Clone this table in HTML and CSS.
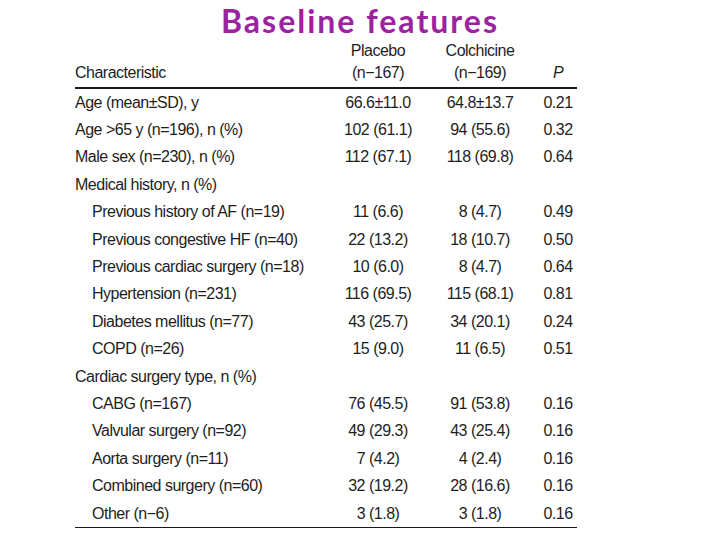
FILE: index.html
```html
<!DOCTYPE html>
<html>
<head>
<meta charset="utf-8">
<link rel="stylesheet" href="styles.css">
</head>
<body>
<div class="slide">
  <h1 class="title">Baseline features</h1>
  <table class="tbl">
    <colgroup>
      <col class="c-name"><col class="c-pla"><col class="c-col"><col class="c-p">
    </colgroup>
    <thead>
      <tr>
        <th class="name">Characteristic</th>
        <th class="num">Placebo<br>(n−167)</th>
        <th class="num">Colchicine<br>(n−169)</th>
        <th class="num"><i>P</i></th>
      </tr>
    </thead>
    <tbody>
      <tr><td class="name">Age (mean±SD), y</td><td class="num">66.6±11.0</td><td class="num">64.8±13.7</td><td class="num">0.21</td></tr>
      <tr><td class="name">Age &gt;65 y (n=196), n (%)</td><td class="num">102 (61.1)</td><td class="num">94 (55.6)</td><td class="num">0.32</td></tr>
      <tr><td class="name">Male sex (n=230), n (%)</td><td class="num">112 (67.1)</td><td class="num">118 (69.8)</td><td class="num">0.64</td></tr>
      <tr><td class="name">Medical history, n (%)</td><td></td><td></td><td></td></tr>
      <tr><td class="name sub">Previous history of AF (n=19)</td><td class="num">11 (6.6)</td><td class="num">8 (4.7)</td><td class="num">0.49</td></tr>
      <tr><td class="name sub">Previous congestive HF (n=40)</td><td class="num">22 (13.2)</td><td class="num">18 (10.7)</td><td class="num">0.50</td></tr>
      <tr><td class="name sub">Previous cardiac surgery (n=18)</td><td class="num">10 (6.0)</td><td class="num">8 (4.7)</td><td class="num">0.64</td></tr>
      <tr><td class="name sub">Hypertension (n=231)</td><td class="num">116 (69.5)</td><td class="num">115 (68.1)</td><td class="num">0.81</td></tr>
      <tr><td class="name sub">Diabetes mellitus (n=77)</td><td class="num">43 (25.7)</td><td class="num">34 (20.1)</td><td class="num">0.24</td></tr>
      <tr><td class="name sub">COPD (n=26)</td><td class="num">15 (9.0)</td><td class="num">11 (6.5)</td><td class="num">0.51</td></tr>
      <tr><td class="name">Cardiac surgery type, n (%)</td><td></td><td></td><td></td></tr>
      <tr><td class="name sub">CABG (n=167)</td><td class="num">76 (45.5)</td><td class="num">91 (53.8)</td><td class="num">0.16</td></tr>
      <tr><td class="name sub">Valvular surgery (n=92)</td><td class="num">49 (29.3)</td><td class="num">43 (25.4)</td><td class="num">0.16</td></tr>
      <tr><td class="name sub">Aorta surgery (n=11)</td><td class="num">7 (4.2)</td><td class="num">4 (2.4)</td><td class="num">0.16</td></tr>
      <tr><td class="name sub">Combined surgery (n=60)</td><td class="num">32 (19.2)</td><td class="num">28 (16.6)</td><td class="num">0.16</td></tr>
      <tr><td class="name sub">Other (n−6)</td><td class="num">3 (1.8)</td><td class="num">3 (1.8)</td><td class="num">0.16</td></tr>
    </tbody>
  </table>
</div>
</body>
</html>
```
FILE: styles.css
```css
html, body {
  margin: 0;
  padding: 0;
  background: #ffffff;
}
.slide {
  width: 720px;
  height: 540px;
  overflow: hidden;
}
.title {
  margin: 0;
  height: 40px;
  padding-top: 1px;
  box-sizing: border-box;
  line-height: 40px;
  text-align: center;
  font-family: Lato, "Open Sans", sans-serif;
  font-weight: 700;
  font-size: 32px;
  letter-spacing: 2px;
  color: #9b239f;
}
.tbl {
  margin-left: 75px;
  width: 502px;
  border-collapse: collapse;
  table-layout: fixed;
  font-family: "Liberation Sans", Arial, sans-serif;
  font-size: 16px;
  letter-spacing: -0.5px;
  color: #1e1e1e;
}
.c-name { width: 260px; }
.c-pla { width: 86px; }
.c-col { width: 118px; }
.c-p { width: 38px; }
.tbl th {
  font-weight: normal;
  line-height: 22px;
  vertical-align: bottom;
  padding: 0 0 3px 0;
  border-bottom: 2px solid #1a1a1a;
}
.tbl td {
  height: 27.4px;
  padding: 0;
  line-height: 20px;
  white-space: nowrap;
}
.tbl tbody tr:first-child td {
  padding-top: 0;
}
.tbl tbody tr:last-child td {
  border-bottom: 1.5px solid #1a1a1a;
}
.name {
  text-align: left;
}
.tbl .sub {
  padding-left: 17px;
}
.num {
  text-align: center;
}
```
